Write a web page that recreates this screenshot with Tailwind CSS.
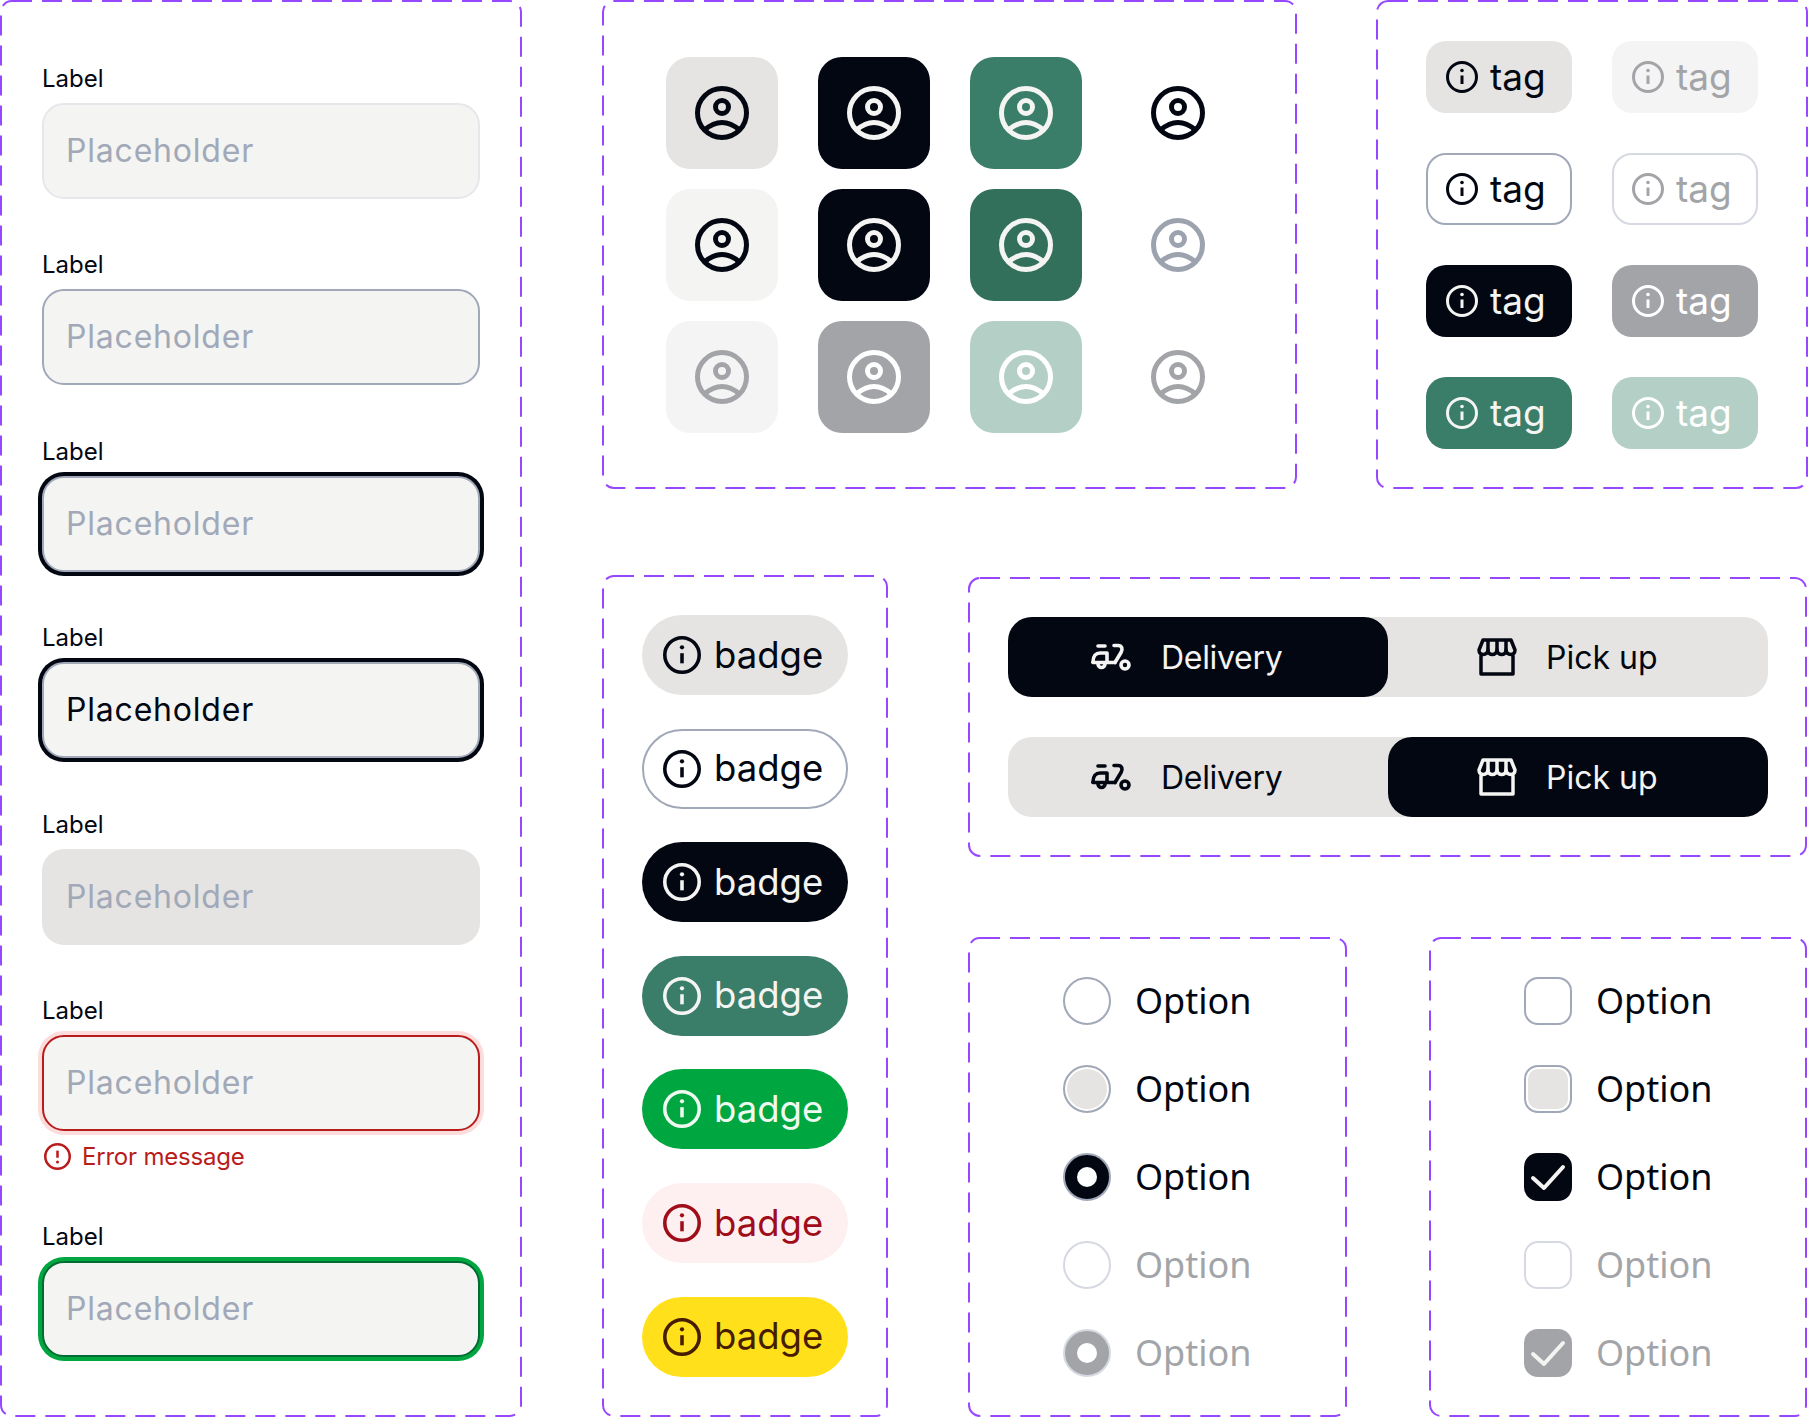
<!DOCTYPE html>
<html lang="en">
<head>
  <meta charset="UTF-8" />
  <title>UI kit</title>
  <script src="https://cdn.jsdelivr.net/npm/@tailwindcss/browser@4"></script>
</head>
<body class="bg-white font-['Inter',sans-serif] text-[#030712]">
<svg width="0" height="0" class="absolute">
  <defs>
    <symbol id="user" viewBox="0 0 54 54"><g fill="none" stroke="currentColor" stroke-width="5"><circle cx="27" cy="27" r="24.5"/><circle cx="27" cy="21" r="6.5"/><path d="M9.5 44Q27 29 44.5 44"/></g></symbol>
    <symbol id="info" viewBox="0 0 32 32"><g fill="none" stroke="currentColor" stroke-width="3"><circle cx="16" cy="16" r="14.5"/><path d="M16 14.5V23"/></g><circle cx="16" cy="9.5" r="1.8" fill="currentColor"/></symbol>
    <symbol id="scooter" viewBox="0 0 40 28"><g fill="none" stroke="currentColor" stroke-width="3.600" stroke-linecap="round" stroke-linejoin="round"><path d="M7 3H14"/><path d="M2 19C2 13 5 10 9 10H16V19"/><path d="M2 19.500H24"/><path d="M7 21A3.500 3.500 0 0 0 14 21"/><path d="M23 2.500H27C31 2.500 32 6 30 9.500L24 19.500"/><circle cx="34" cy="22" r="4"/></g></symbol>
    <symbol id="store" viewBox="0 0 40 38"><g fill="none" stroke="currentColor" stroke-width="3.500" stroke-linejoin="round" stroke-linecap="round"><path d="M6 2H34L38 12C38 18 30 18 29 12C29 18 20.500 18 20 12C19.500 18 11 18 11 12C10 18 2 18 2 12Z"/><path d="M11 3L11 12M20 3V12M29 3V12"/><path d="M4 18V36H36V18"/></g></symbol>
    <symbol id="check" viewBox="0 0 48 48"><path d="M9 25L20 35L39 14" fill="none" stroke="currentColor" stroke-width="4" stroke-linecap="round" stroke-linejoin="round"/></symbol>
  </defs>
</svg>

<div class="flex w-[1808px] h-[1417px] gap-[80px]">

  <!-- input states -->
  <section class="relative w-[522px] h-[1417px] pt-[65px] pl-[42px] flex flex-col gap-[52.400px]">
    <svg class="absolute inset-0 w-full h-full"><rect x="1" y="1" rx="11" class="w-[calc(100%-2px)] h-[calc(100%-2px)]" fill="none" stroke="#9747ff" stroke-width="2" stroke-dasharray="20 10"/></svg>
    <div class="flex flex-col gap-[10px]">
      <div class="h-[28px] text-[24px] leading-[28px]">Label</div>
      <div class="w-[438px] h-[96px] rounded-[22px] bg-[#f4f4f2] border-2 border-[#e5e7eb] pl-[22px] flex items-center text-[32px] tracking-[0.800px] text-[#a1a8b8]">Placeholder</div>
    </div>
    <div class="flex flex-col gap-[10px]">
      <div class="h-[28px] text-[24px] leading-[28px]">Label</div>
      <div class="w-[438px] h-[96px] rounded-[22px] bg-[#f4f4f2] border-2 border-[#a1a8b8] pl-[22px] flex items-center text-[32px] tracking-[0.800px] text-[#a1a8b8]">Placeholder</div>
    </div>
    <div class="flex flex-col gap-[10px]">
      <div class="h-[28px] text-[24px] leading-[28px]">Label</div>
      <div class="w-[438px] h-[96px] rounded-[22px] bg-[#f4f4f2] border-2 border-[#a1a8b8] ring-4 ring-[#030712] pl-[22px] flex items-center text-[32px] tracking-[0.800px] text-[#a1a8b8]">Placeholder</div>
    </div>
    <div class="flex flex-col gap-[10px]">
      <div class="h-[28px] text-[24px] leading-[28px]">Label</div>
      <div class="w-[438px] h-[96px] rounded-[22px] bg-[#f4f4f2] border-2 border-[#a1a8b8] ring-4 ring-[#030712] pl-[22px] flex items-center text-[32px] tracking-[0.800px] text-[#030712]">Placeholder</div>
    </div>
    <div class="flex flex-col gap-[10px]">
      <div class="h-[28px] text-[24px] leading-[28px]">Label</div>
      <div class="w-[438px] h-[96px] rounded-[22px] bg-[#e5e4e2] pl-[24px] flex items-center text-[32px] tracking-[0.800px] text-[#a1a8b8]">Placeholder</div>
    </div>
    <div class="flex flex-col gap-[10px]">
      <div class="h-[28px] text-[24px] leading-[28px]">Label</div>
      <div class="w-[438px] h-[96px] rounded-[22px] bg-[#f4f4f2] border-2 border-[#b91c1c] ring-4 ring-[#fddcdc] pl-[22px] flex items-center text-[32px] tracking-[0.800px] text-[#a1a8b8]">Placeholder</div>
      <div class="flex items-center gap-[11px] pl-[2px] mt-[2px] text-[24px] tracking-[-0.200px] leading-[28px] text-[#b91c1c]">
        <svg class="w-[27px] h-[27px]"><use href="#info" transform="rotate(180 13.500 13.500)"/></svg>
        <span>Error message</span>
      </div>
    </div>
    <div class="flex flex-col gap-[10px]">
      <div class="h-[28px] text-[24px] leading-[28px]">Label</div>
      <div class="w-[438px] h-[96px] rounded-[22px] bg-[#f4f4f2] border-2 border-[#006b33] ring-4 ring-[#00a63f] pl-[22px] flex items-center text-[32px] tracking-[0.800px] text-[#a1a8b8]">Placeholder</div>
    </div>
  </section>

  <div class="flex flex-col w-[1206px] gap-[86px]">
    <div class="flex gap-[79px]">
      <!-- icon buttons -->
      <section class="relative w-[695px] h-[489px] pt-[57px] pl-[64px]">
        <svg class="absolute inset-0 w-full h-full"><rect x="1" y="1" rx="11" class="w-[calc(100%-2px)] h-[calc(100%-2px)]" fill="none" stroke="#9747ff" stroke-width="2" stroke-dasharray="20 10"/></svg>
        <div class="grid grid-cols-[112px_112px_112px_112px] gap-x-[40px] gap-y-[20px]">
          <div class="w-[112px] h-[112px] rounded-[24px] bg-[#e5e4e2] flex items-center justify-center text-[#030712]"><svg class="w-[54px] h-[54px]"><use href="#user"/></svg></div>
          <div class="w-[112px] h-[112px] rounded-[24px] bg-[#030712] flex items-center justify-center text-[#f4f4f2]"><svg class="w-[54px] h-[54px]"><use href="#user"/></svg></div>
          <div class="w-[112px] h-[112px] rounded-[24px] bg-[#3a7d68] flex items-center justify-center text-[#f4f4f2]"><svg class="w-[54px] h-[54px]"><use href="#user"/></svg></div>
          <div class="w-[112px] h-[112px] flex items-center justify-center text-[#030712]"><svg class="w-[54px] h-[54px]"><use href="#user"/></svg></div>

          <div class="w-[112px] h-[112px] rounded-[24px] bg-[#f4f4f2] flex items-center justify-center text-[#030712]"><svg class="w-[54px] h-[54px]"><use href="#user"/></svg></div>
          <div class="w-[112px] h-[112px] rounded-[24px] bg-[#030712] flex items-center justify-center text-[#f4f4f2]"><svg class="w-[54px] h-[54px]"><use href="#user"/></svg></div>
          <div class="w-[112px] h-[112px] rounded-[24px] bg-[#33705c] flex items-center justify-center text-[#f4f4f2]"><svg class="w-[54px] h-[54px]"><use href="#user"/></svg></div>
          <div class="w-[112px] h-[112px] flex items-center justify-center text-[#9ca3af]"><svg class="w-[54px] h-[54px]"><use href="#user"/></svg></div>

          <div class="w-[112px] h-[112px] rounded-[24px] bg-[#f4f4f4] flex items-center justify-center text-[#a3a4a8]"><svg class="w-[54px] h-[54px]"><use href="#user"/></svg></div>
          <div class="w-[112px] h-[112px] rounded-[24px] bg-[#a3a4a8] flex items-center justify-center text-white"><svg class="w-[54px] h-[54px]"><use href="#user"/></svg></div>
          <div class="w-[112px] h-[112px] rounded-[24px] bg-[#b4cfc5] flex items-center justify-center text-white"><svg class="w-[54px] h-[54px]"><use href="#user"/></svg></div>
          <div class="w-[112px] h-[112px] flex items-center justify-center text-[#a3a4a8]"><svg class="w-[54px] h-[54px]"><use href="#user"/></svg></div>
        </div>
      </section>

      <!-- tags -->
      <section class="relative w-[432px] h-[489px] pt-[41px] pl-[50px]">
        <svg class="absolute inset-0 w-full h-full"><rect x="1" y="1" rx="11" class="w-[calc(100%-2px)] h-[calc(100%-2px)]" fill="none" stroke="#9747ff" stroke-width="2" stroke-dasharray="20 10"/></svg>
        <div class="grid grid-cols-[146px_146px] gap-x-[40px] gap-y-[40px] text-[37px] leading-[40px]">
          <div class="w-[146px] h-[72px] rounded-[20px] bg-[#e5e4e2] text-[#030712] flex items-center gap-[12px] pl-[20px]"><svg class="w-[32px] h-[32px] shrink-0"><use href="#info"/></svg><span class="-mt-[1px]">tag</span></div>
          <div class="w-[146px] h-[72px] rounded-[20px] bg-[#f4f4f4] text-[#a3a4a8] flex items-center gap-[12px] pl-[20px]"><svg class="w-[32px] h-[32px] shrink-0"><use href="#info"/></svg><span class="-mt-[1px]">tag</span></div>
          <div class="w-[146px] h-[72px] rounded-[20px] border-2 border-[#a1a8b8] text-[#030712] flex items-center gap-[12px] pl-[18px]"><svg class="w-[32px] h-[32px] shrink-0"><use href="#info"/></svg><span class="-mt-[1px]">tag</span></div>
          <div class="w-[146px] h-[72px] rounded-[20px] border-2 border-[#d6d9e2] text-[#a3a4a8] flex items-center gap-[12px] pl-[18px]"><svg class="w-[32px] h-[32px] shrink-0"><use href="#info"/></svg><span class="-mt-[1px]">tag</span></div>
          <div class="w-[146px] h-[72px] rounded-[20px] bg-[#030712] text-[#f4f4f2] flex items-center gap-[12px] pl-[20px]"><svg class="w-[32px] h-[32px] shrink-0"><use href="#info"/></svg><span class="-mt-[1px]">tag</span></div>
          <div class="w-[146px] h-[72px] rounded-[20px] bg-[#a3a4a8] text-white flex items-center gap-[12px] pl-[20px]"><svg class="w-[32px] h-[32px] shrink-0"><use href="#info"/></svg><span class="-mt-[1px]">tag</span></div>
          <div class="w-[146px] h-[72px] rounded-[20px] bg-[#3a7d68] text-[#f4f4f2] flex items-center gap-[12px] pl-[20px]"><svg class="w-[32px] h-[32px] shrink-0"><use href="#info"/></svg><span class="-mt-[1px]">tag</span></div>
          <div class="w-[146px] h-[72px] rounded-[20px] bg-[#b4cfc5] text-white flex items-center gap-[12px] pl-[20px]"><svg class="w-[32px] h-[32px] shrink-0"><use href="#info"/></svg><span class="-mt-[1px]">tag</span></div>
        </div>
      </section>
    </div>

    <div class="flex gap-[80px]">
      <!-- badges -->
      <section class="relative w-[286px] h-[842px] pt-[40px] pl-[40px] flex flex-col gap-[33.600px] text-[36.500px]">
        <svg class="absolute inset-0 w-full h-full"><rect x="1" y="1" rx="11" class="w-[calc(100%-2px)] h-[calc(100%-2px)]" fill="none" stroke="#9747ff" stroke-width="2" stroke-dasharray="20 10"/></svg>
        <div class="relative w-[206px] h-[80px] rounded-full bg-[#e5e4e2] text-[#030712] flex items-center gap-[13px] pl-[21px]"><svg class="w-[38px] h-[38px] shrink-0"><use href="#info"/></svg><span>badge</span></div>
        <div class="relative w-[206px] h-[80px] rounded-full border-2 border-[#a1a8b8] text-[#030712] flex items-center gap-[13px] pl-[19px]"><svg class="w-[38px] h-[38px] shrink-0"><use href="#info"/></svg><span>badge</span></div>
        <div class="relative w-[206px] h-[80px] rounded-full bg-[#030712] text-[#f4f4f2] flex items-center gap-[13px] pl-[21px]"><svg class="w-[38px] h-[38px] shrink-0"><use href="#info"/></svg><span>badge</span></div>
        <div class="relative w-[206px] h-[80px] rounded-full bg-[#3a7d68] text-[#f4f4f2] flex items-center gap-[13px] pl-[21px]"><svg class="w-[38px] h-[38px] shrink-0"><use href="#info"/></svg><span>badge</span></div>
        <div class="relative w-[206px] h-[80px] rounded-full bg-[#00a63f] text-[#eefaf0] flex items-center gap-[13px] pl-[21px]"><svg class="w-[38px] h-[38px] shrink-0"><use href="#info"/></svg><span>badge</span></div>
        <div class="relative w-[206px] h-[80px] rounded-full bg-[#fef0f1] text-[#a00d1a] flex items-center gap-[13px] pl-[21px]"><svg class="w-[38px] h-[38px] shrink-0"><use href="#info"/></svg><span>badge</span></div>
        <div class="relative w-[206px] h-[80px] rounded-full bg-[#ffe01b] text-[#461d00] flex items-center gap-[13px] pl-[21px]"><svg class="w-[38px] h-[38px] shrink-0"><use href="#info"/></svg><span>badge</span></div>
      </section>

      <div class="flex flex-col w-[840px] pt-[2px] gap-[80px]">
        <!-- segmented control -->
        <section class="relative w-[839px] h-[280px] pt-[40px] pl-[40px] flex flex-col gap-[40px] text-[32px]">
          <svg class="absolute inset-0 w-full h-full"><rect x="1" y="1" rx="11" class="w-[calc(100%-2px)] h-[calc(100%-2px)]" fill="none" stroke="#9747ff" stroke-width="2" stroke-dasharray="20 10"/></svg>
          <div class="relative flex w-[760px] h-[80px] rounded-[24px] bg-[#e5e4e2]">
            <div class="w-[380px] rounded-[24px] bg-[#030712] text-[#f4f4f2] flex items-center pl-[83px] gap-[30px]"><svg class="w-[40px] h-[28px] shrink-0"><use href="#scooter"/></svg><span class="mt-[2px] tracking-[-0.300px]">Delivery</span></div>
            <div class="w-[380px] rounded-[24px] text-[#030712] flex items-center pl-[89px] gap-[29px]"><svg class="w-[40px] h-[38px] shrink-0"><use href="#store"/></svg><span class="mt-[2px]">Pick up</span></div>
          </div>
          <div class="relative flex w-[760px] h-[80px] rounded-[24px] bg-[#e5e4e2]">
            <div class="w-[380px] rounded-[24px] text-[#030712] flex items-center pl-[83px] gap-[30px]"><svg class="w-[40px] h-[28px] shrink-0"><use href="#scooter"/></svg><span class="mt-[2px] tracking-[-0.300px]">Delivery</span></div>
            <div class="w-[380px] rounded-[24px] bg-[#030712] text-[#f4f4f2] flex items-center pl-[89px] gap-[29px]"><svg class="w-[40px] h-[38px] shrink-0"><use href="#store"/></svg><span class="mt-[2px]">Pick up</span></div>
          </div>
        </section>

        <div class="flex gap-[82px]">
          <!-- radios -->
          <section class="relative w-[379px] h-[480px] pt-[40px] pl-[95px] flex flex-col gap-[40px] font-['Noto_Sans',sans-serif] text-[36px]">
            <svg class="absolute inset-0 w-full h-full"><rect x="1" y="1" rx="11" class="w-[calc(100%-2px)] h-[calc(100%-2px)]" fill="none" stroke="#9747ff" stroke-width="2" stroke-dasharray="20 10"/></svg>
            <div class="relative flex items-center h-[48px] gap-[24px] text-[#030712]"><span class="w-[48px] h-[48px] rounded-full border-2 border-[#a1a8b8]"></span><span>Option</span></div>
            <div class="relative flex items-center h-[48px] gap-[24px] text-[#030712]"><span class="w-[48px] h-[48px] rounded-full border-2 border-[#a1a8b8] bg-[#e5e4e2] ring-2 ring-inset ring-white"></span><span>Option</span></div>
            <div class="relative flex items-center h-[48px] gap-[24px] text-[#030712]"><span class="w-[48px] h-[48px] rounded-full border-2 border-[#a1a8b8] bg-[#030712] flex items-center justify-center"><span class="w-[20px] h-[20px] rounded-full bg-white"></span></span><span>Option</span></div>
            <div class="relative flex items-center h-[48px] gap-[24px] text-[#a3a4a8]"><span class="w-[48px] h-[48px] rounded-full border-2 border-[#d6d9e2]"></span><span>Option</span></div>
            <div class="relative flex items-center h-[48px] gap-[24px] text-[#a3a4a8]"><span class="w-[48px] h-[48px] rounded-full border-2 border-[#d6d9e2] bg-[#a3a4a8] flex items-center justify-center"><span class="w-[20px] h-[20px] rounded-full bg-white"></span></span><span>Option</span></div>
          </section>

          <!-- checkboxes -->
          <section class="relative w-[378px] h-[480px] pt-[40px] pl-[95px] flex flex-col gap-[40px] font-['Noto_Sans',sans-serif] text-[36px]">
            <svg class="absolute inset-0 w-full h-full"><rect x="1" y="1" rx="11" class="w-[calc(100%-2px)] h-[calc(100%-2px)]" fill="none" stroke="#9747ff" stroke-width="2" stroke-dasharray="20 10"/></svg>
            <div class="relative flex items-center h-[48px] gap-[24px] text-[#030712]"><span class="w-[48px] h-[48px] rounded-[14px] border-2 border-[#a1a8b8]"></span><span>Option</span></div>
            <div class="relative flex items-center h-[48px] gap-[24px] text-[#030712]"><span class="w-[48px] h-[48px] rounded-[14px] border-2 border-[#a1a8b8] bg-[#e5e4e2] ring-2 ring-inset ring-white"></span><span>Option</span></div>
            <div class="relative flex items-center h-[48px] gap-[24px] text-[#030712]"><span class="w-[48px] h-[48px] rounded-[14px] bg-[#030712] text-[#f4f4f2]"><svg class="w-[48px] h-[48px]"><use href="#check"/></svg></span><span>Option</span></div>
            <div class="relative flex items-center h-[48px] gap-[24px] text-[#a3a4a8]"><span class="w-[48px] h-[48px] rounded-[14px] border-2 border-[#d6d9e2]"></span><span>Option</span></div>
            <div class="relative flex items-center h-[48px] gap-[24px] text-[#a3a4a8]"><span class="w-[48px] h-[48px] rounded-[14px] bg-[#a3a4a8] text-[#f4f4f2]"><svg class="w-[48px] h-[48px]"><use href="#check"/></svg></span><span>Option</span></div>
          </section>
        </div>
      </div>
    </div>
  </div>
</div>
</body>
</html>
